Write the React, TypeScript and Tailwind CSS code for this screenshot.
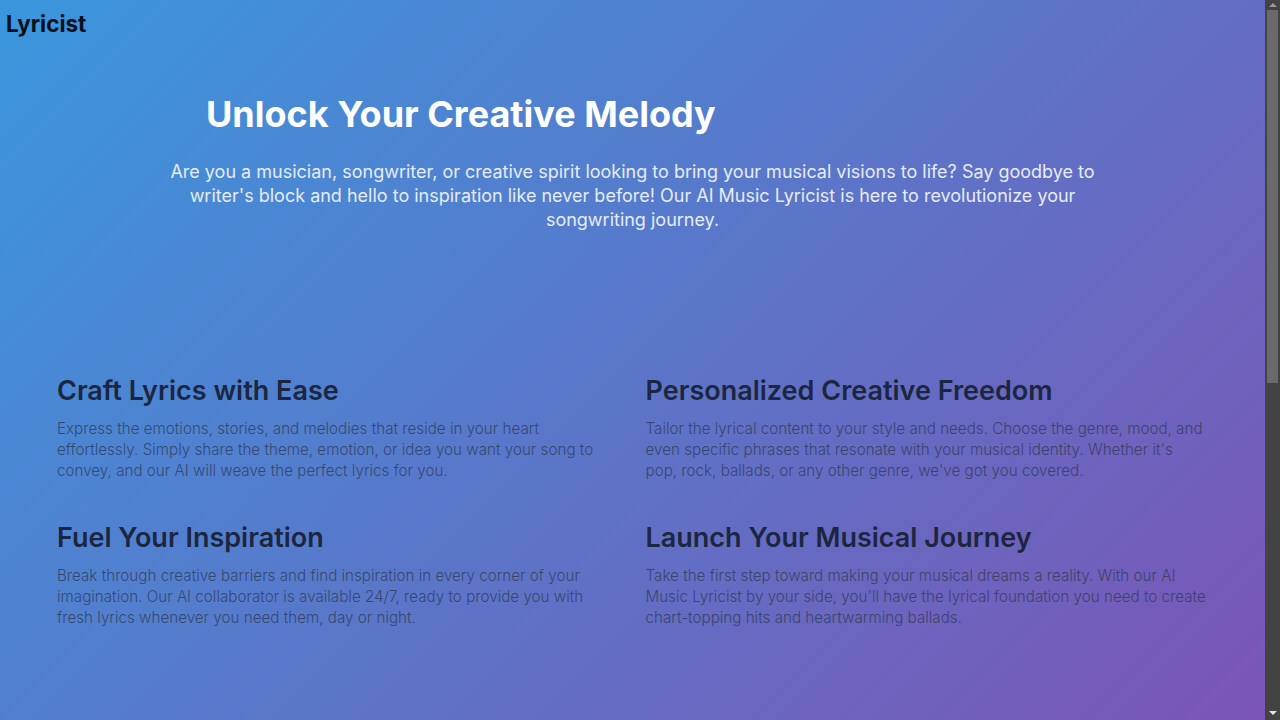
const features = [
  {
    title: "Craft Lyrics with Ease",
    text: "Express the emotions, stories, and melodies that reside in your heart effortlessly. Simply share the theme, emotion, or idea you want your song to convey, and our AI will weave the perfect lyrics for you.",
  },
  {
    title: "Personalized Creative Freedom",
    text: "Tailor the lyrical content to your style and needs. Choose the genre, mood, and even specific phrases that resonate with your musical identity. Whether it's pop, rock, ballads, or any other genre, we've got you covered.",
  },
  {
    title: "Fuel Your Inspiration",
    text: "Break through creative barriers and find inspiration in every corner of your imagination. Our AI collaborator is available 24/7, ready to provide you with fresh lyrics whenever you need them, day or night.",
  },
  {
    title: "Launch Your Musical Journey",
    text: "Take the first step toward making your musical dreams a reality. With our AI Music Lyricist by your side, you'll have the lyrical foundation you need to create chart-topping hits and heartwarming ballads.",
  },
];

// static stand-in for the browser scrollbar seen in the screenshot
const Scrollbar = () => (
  <aside className="flex w-[15px] flex-col items-center bg-[#434343]">
    <div className="flex h-[10px] items-center justify-center">
      <div className="h-0 w-0 border-x-[4px] border-b-[4px] border-x-transparent border-b-[#9a9a9a]" />
    </div>
    <div className="h-[373px] w-[11px] bg-[#6a6a6a]" />
    <div className="flex-1" />
    <div className="flex h-[14px] items-center justify-center">
      <div className="h-0 w-0 border-x-[4px] border-t-[4px] border-x-transparent border-t-[#e6e6e6]" />
    </div>
  </aside>
);

export default function App() {
  return (
    <div className="flex h-screen font-['Inter',sans-serif]">
      <main className="flex-1 overflow-hidden bg-[linear-gradient(135deg,#3a97dd,#7b55b5)]">
        <header className="px-[6px] pt-[10px]">
          <span className="text-[22.5px] font-bold leading-7 text-[#0b0f1a]">Lyricist</span>
        </header>

        <section className="mt-[56px]">
          <h1 className="pl-[206px] text-4xl font-bold leading-10 text-white">Unlock Your Creative Melody</h1>
          <p className="mx-auto mt-[26px] w-[932px] text-center text-lg leading-6 text-[#e6ecf7]">
            Are you a musician, songwriter, or creative spirit looking to bring your musical visions to life? Say goodbye to writer's block and hello to inspiration like never before! Our AI Music Lyricist is here to revolutionize your songwriting journey.
          </p>
        </section>

        <section className="mt-[141px] grid grid-cols-2 gap-x-[26px] gap-y-[39px] px-[57px]">
          {features.map((f) => (
            <div key={f.title}>
              <h2 className="text-[27px] font-semibold leading-9 text-[#1c2640]">{f.title}</h2>
              <p className="mt-[9px] text-[15.2px] font-light leading-[21px] text-[#2e3a55]/80">{f.text}</p>
            </div>
          ))}
        </section>
      </main>
      <Scrollbar />
    </div>
  );
}
